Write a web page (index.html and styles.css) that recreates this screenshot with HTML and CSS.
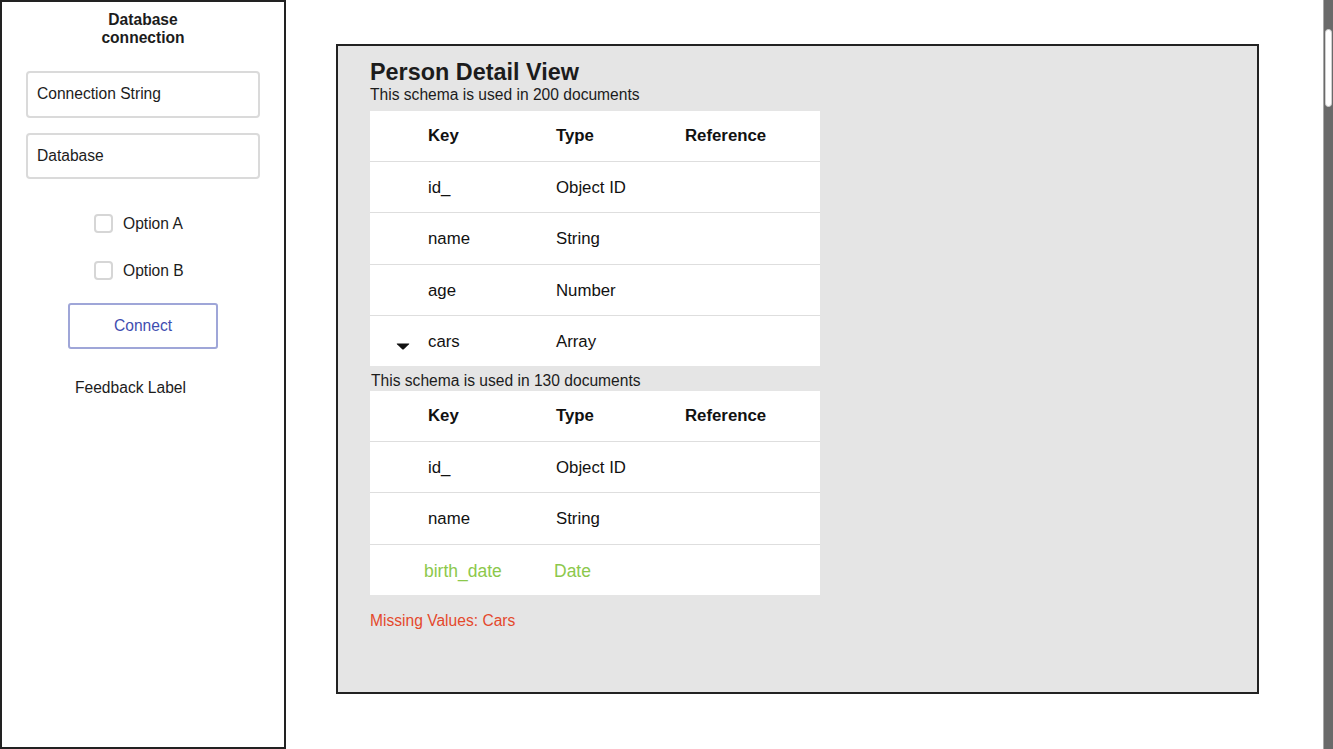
FILE: index.html
```html
<!DOCTYPE html>
<html>
<head>
<meta charset="utf-8">
<link rel="stylesheet" href="styles.css">
</head>
<body>
<div class="page">
  <aside class="sidebar">
    <div class="side-title">Database<br>connection</div>
    <div class="field">Connection String</div>
    <div class="field field-second">Database</div>
    <label class="option option-a"><span class="check"></span><span>Option A</span></label>
    <label class="option option-b"><span class="check"></span><span>Option B</span></label>
    <div class="btn-row"><div class="btn">Connect</div></div>
    <div class="feedback">Feedback Label</div>
  </aside>
  <main class="main">
    <section class="panel">
      <h1 class="title">Person Detail View</h1>
      <div class="sub">This schema is used in 200 documents</div>
      <div class="table">
        <div class="row head"><span></span><span>Key</span><span>Type</span><span>Reference</span></div>
        <div class="row"><span></span><span>id_</span><span>Object ID</span><span></span></div>
        <div class="row"><span></span><span>name</span><span>String</span><span></span></div>
        <div class="row"><span></span><span>age</span><span>Number</span><span></span></div>
        <div class="row"><span class="caret"><svg width="14" height="7" viewBox="0 0 14 7"><path d="M1.2 0.5 H12.8 Q13.8 0.5 13 1.3 L7.8 6.2 Q7 6.9 6.2 6.2 L1 1.3 Q0.2 0.5 1.2 0.5 Z" fill="#111"/></svg></span><span>cars</span><span>Array</span><span></span></div>
      </div>
      <div class="sub sub-second">This schema is used in 130 documents</div>
      <div class="table">
        <div class="row head"><span></span><span>Key</span><span>Type</span><span>Reference</span></div>
        <div class="row"><span></span><span>id_</span><span>Object ID</span><span></span></div>
        <div class="row"><span></span><span>name</span><span>String</span><span></span></div>
        <div class="row new"><span></span><span class="nk">birth_date</span><span class="nt">Date</span><span></span></div>
      </div>
      <div class="missing">Missing Values: Cars</div>
    </section>
  </main>
  <div class="scrollbar"><div class="thumb"></div></div>
</div>
</body>
</html>
```

FILE: styles.css
```css
* { box-sizing: border-box; }
html, body { margin: 0; padding: 0; }
body {
  font-family: "Liberation Sans", Arial, sans-serif;
  font-size: 15.6px;
  color: #1c1c1c;
  background: #fff;
}
.page {
  display: flex;
  height: 749px;
  overflow: hidden;
}
.sidebar {
  width: 286px;
  height: 749px;
  border: 2px solid #222;
  padding-top: 9px;
  display: flex;
  flex-direction: column;
  flex-shrink: 0;
}
.side-title {
  font-weight: bold;
  text-align: center;
  line-height: 18px;
  margin-bottom: 24px;
}
.field {
  margin: 0 24px;
  height: 47px;
  border: 2px solid #dadada;
  border-radius: 4px;
  padding-left: 9px;
  padding-bottom: 1px;
  display: flex;
  align-items: center;
  color: #1c1c1c;
}
.field-second { margin-top: 15px; height: 46px; }
.option {
  display: flex;
  align-items: center;
  padding-left: 92px;
  height: 19px;
  gap: 10px;
}
.option-a { margin-top: 35px; }
.option-b { margin-top: 28px; }
.check {
  width: 19px;
  height: 19px;
  border: 2px solid #d6d6d6;
  border-radius: 4px;
  background: #fff;
}
.btn-row {
  display: flex;
  justify-content: center;
  margin-top: 23px;
}
.btn {
  width: 150px;
  height: 46px;
  border: 2px solid #9fa6d8;
  border-radius: 3px;
  color: #3f4db0;
  display: flex;
  align-items: center;
  justify-content: center;
}
.feedback {
  margin-top: 30px;
  padding-left: 73px;
  line-height: 18px;
}
.main {
  flex: 1;
  padding-top: 44px;
  padding-left: 50px;
}
.panel {
  width: 923px;
  height: 650px;
  border: 2px solid #222;
  background: #e5e5e5;
  padding: 12px 0 0 32px;
}
.title {
  margin: 0;
  font-size: 23.4px;
  line-height: 28px;
  font-weight: bold;
  color: #1c1c1c;
}
.sub {
  line-height: 18px;
  margin-bottom: 7px;
  color: #1c1c1c;
}
.sub-second {
  margin-top: 6px;
  margin-bottom: 1px;
  padding-left: 1px;
}
.table {
  width: 450px;
  background: #fff;
  font-size: 16.8px;
}
.row {
  display: grid;
  grid-template-columns: 58px 128px 129px 135px;
  height: 51.25px;
  padding-top: 2px;
  border-top: 1px solid #dedede;
  align-items: center;
  color: #111;
}
.row.head {
  height: 50px;
  padding-top: 0;
  border-top: none;
  font-weight: bold;
}
.caret {
  display: flex;
  justify-content: flex-end;
  padding-right: 18px;
  padding-top: 9px;
}
.caret svg { display: block; }
.row.new { font-size: 17.5px; color: #8cc84b; padding-top: 4px; }
.nk { margin-left: -4px; }
.nt { margin-left: -2px; }
.missing {
  margin-top: 17px;
  line-height: 18px;
  color: #e4492c;
}
.scrollbar {
  width: 10px;
  flex-shrink: 0;
  background: #6a6a6a;
  border-left: 1px solid #a8a8a8;
  padding-top: 29px;
}
.thumb {
  width: 7px;
  height: 78px;
  margin-left: 1px;
  background: #fff;
  border: 1px solid #cfcfcf;
  border-radius: 4px;
}
```
